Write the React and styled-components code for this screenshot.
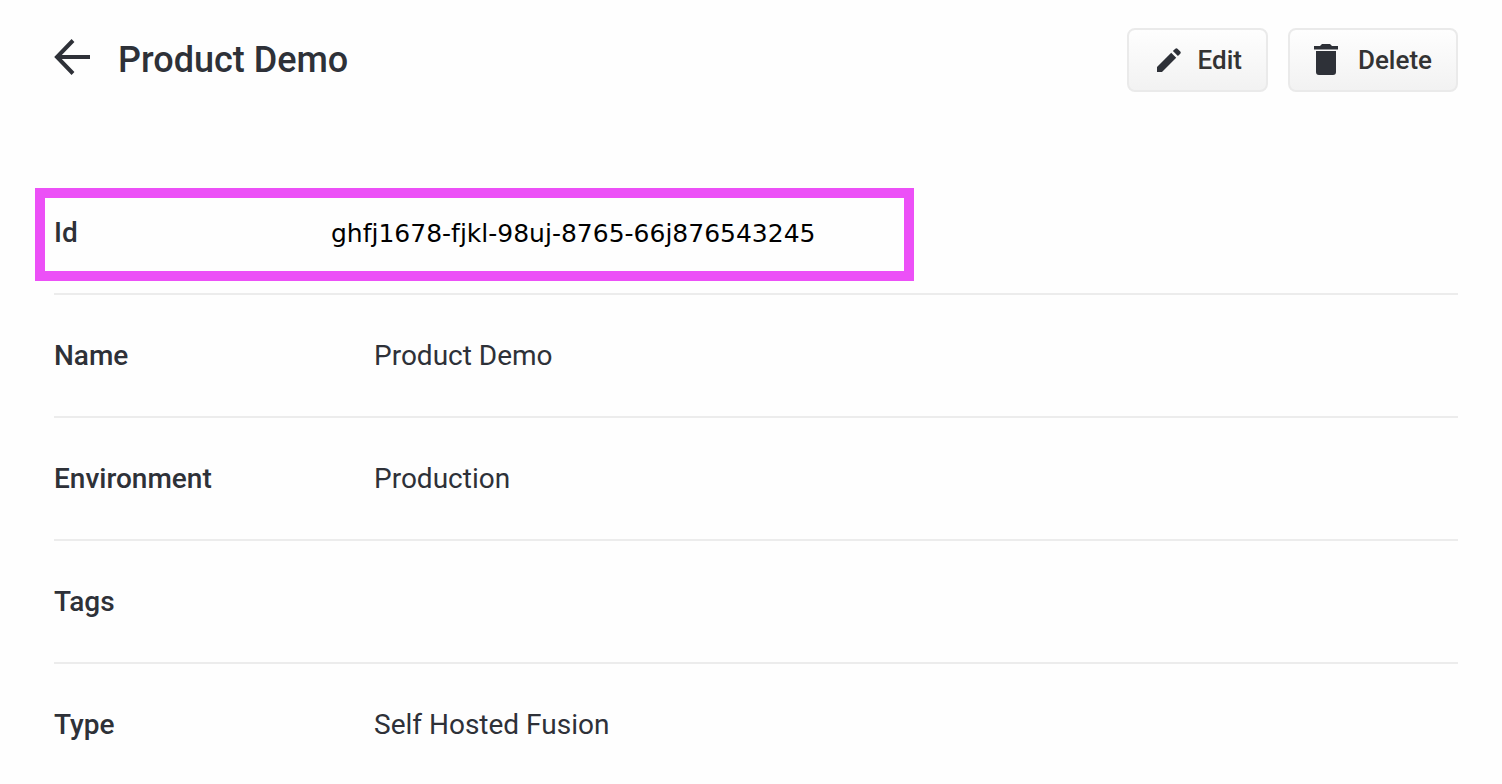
import React from "react";
import styled, { createGlobalStyle } from "styled-components";

const COLORS = {
  text: "#2e3138",
  buttonText: "#333",
  line: "#ececec",
  accent: "#ec50f7",
};

const DETAILS = [
  { label: "Id", value: "ghfj1678-fjkl-98uj-8765-66j876543245", highlighted: true },
  { label: "Name", value: "Product Demo" },
  { label: "Environment", value: "Production" },
  { label: "Tags", value: "" },
  { label: "Type", value: "Self Hosted Fusion" },
];

const BackIcon = () => (
  <svg width="36" height="36" viewBox="0 0 36 36" fill="none" aria-hidden="true">
    <path d="M19 1.5L3 18l16 16.5M3 18h33" stroke="currentColor" strokeWidth="4" />
  </svg>
);

const EditIcon = () => (
  <svg width="29" height="24" viewBox="0 0 29 24" fill={COLORS.text} aria-hidden="true">
    <path d="M4 19v5h5L23.2 9.8l-5-5zM27.3 5.7a1.7 1.7 0 0 0 0-2.2L24.5.7a1.7 1.7 0 0 0-2.2 0l-2.4 2.4 5 5z" />
  </svg>
);

const TrashIcon = () => (
  <svg width="28" height="32" viewBox="0 0 28 32" fill={COLORS.text} aria-hidden="true">
    <path d="M0 2h6l2-2h8l2 2h6v3.5H0zM2 7h20v21a3 3 0 0 1-3 3H5a3 3 0 0 1-3-3z" />
  </svg>
);

const App = () => {
  return (
    <Page>
      <GlobalStyle />
      <Header>
        <BackLink href="#" aria-label="Back">
          <BackIcon />
        </BackLink>
        <Title>Product Demo</Title>
        <Actions>
          <Button type="button">
            <EditIcon />
            Edit
          </Button>
          <Button type="button">
            <TrashIcon />
            Delete
          </Button>
        </Actions>
      </Header>

      <Details>
        {DETAILS.map(({ label, value, highlighted }) => (
          <Row key={label}>
            <Label $narrow={highlighted}>{label}</Label>
            {highlighted ? <IdValue>{value}</IdValue> : <Value>{value}</Value>}
            {highlighted && <Highlight />}
          </Row>
        ))}
      </Details>
    </Page>
  );
};

const GlobalStyle = createGlobalStyle`
  *,
  *::before,
  *::after {
    box-sizing: border-box;
  }

  body {
    margin: 0;
    background: #fefefe;
    color: ${COLORS.text};
    font-family: Roboto, "Liberation Sans", sans-serif;
    font-size: 28px;
  }
`;

const Page = styled.main`
  padding: 28px 44px 0 54px;
`;

const Header = styled.header`
  display: flex;
  align-items: center;
  margin-bottom: 80px;
`;

const BackLink = styled.a`
  display: flex;
  color: inherit;
  margin-right: 28px;
  padding-bottom: 6px;
`;

const Title = styled.h1`
  margin: 0;
  font-size: 36px;
  font-weight: 500;
  line-height: 40px;
`;

const Actions = styled.div`
  display: flex;
  gap: 20px;
  margin-left: auto;
`;

const Button = styled.button`
  display: flex;
  align-items: center;
  gap: 16px;
  height: 64px;
  padding: 0 24px;
  border: 2px solid #eaeaea;
  border-radius: 8px;
  background: linear-gradient(#fefefe, #f2f2f2);
  color: ${COLORS.buttonText};
  font-family: inherit;
  font-size: 26px;
  font-weight: 500;
  cursor: pointer;
`;

const Details = styled.dl`
  margin: 0;
`;

const Row = styled.div`
  position: relative;
  display: flex;
  align-items: baseline;
  padding: 45px 0 44px;
  line-height: 32px;
  border-bottom: 2px solid ${COLORS.line};

  &:last-of-type {
    padding-bottom: 20px;
    border-bottom: none;
  }
`;

const Label = styled.dt`
  flex: none;
  width: ${({ $narrow }) => ($narrow ? "277px" : "320px")};
  font-weight: 500;
`;

const Value = styled.dd`
  margin: 0;
`;

const IdValue = styled(Value)`
  color: #000;
  font-family: "DejaVu Sans", sans-serif;
  font-size: 25px;
  line-height: 28px;
`;

/* Frame drawn around the row, on top of the page content */
const Highlight = styled.span`
  position: absolute;
  top: 16px;
  bottom: 12px;
  left: -19px;
  width: 879px;
  max-width: calc(100% + 38px);
  border: 10px solid ${COLORS.accent};
  pointer-events: none;
`;

export default App;
